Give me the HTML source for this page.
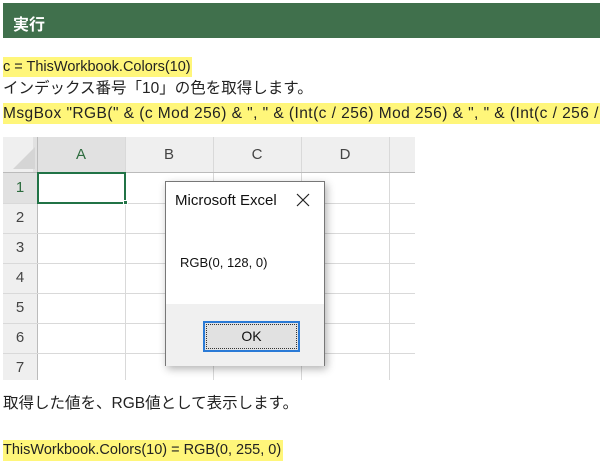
<!DOCTYPE html>
<html><head><meta charset="utf-8"><style>
*{margin:0;padding:0;box-sizing:border-box}
body{width:600px;height:450px;overflow:hidden;background:#fff;font-family:"Liberation Sans","Noto Sans CJK JP",sans-serif;color:#222;position:relative;font-size:15.5px}
.a{position:absolute;white-space:nowrap}
.hl{background:#fff67a}
.hdr{left:3px;top:3px;width:597px;height:35px;background:#40704c;color:#fff;font-weight:bold;font-size:16px;padding:8px 0 0 10px}
.xl{left:3px;top:137px;width:412px;height:243px;background:#fff;overflow:hidden}
.v{position:absolute;top:0;width:1px;height:243px;background:#d9d9d9}
.h{position:absolute;left:0;height:1px;width:412px;background:#d9d9d9}
.ch{position:absolute;top:0;height:35px;font-size:15px;color:#444;text-align:center;line-height:35px}
.rh{position:absolute;left:0;width:34px;font-size:15px;color:#444;text-align:center;line-height:30px}
</style></head><body>
<div class="a hdr">実行</div>
<div class="a hl" style="left:3px;top:57px;height:20px;line-height:20px;font-size:14.5px;padding-right:1px">c = ThisWorkbook.Colors(10)</div>
<div class="a" style="left:3px;top:79px;line-height:20px">インデックス番号「10」の色を取得します。</div>
<div class="a hl" style="left:3px;top:103px;height:21px;width:597px;line-height:21px;overflow:hidden;letter-spacing:0.45px">MsgBox "RGB(" &amp; (c Mod 256) &amp; ", " &amp; (Int(c / 256) Mod 256) &amp; ", " &amp; (Int(c / 256 / 256) Mod 256) &amp; ")"</div>
<div class="a xl">
 <div style="position:absolute;left:0;top:0;width:412px;height:35px;background:#efefef"></div>
 <div style="position:absolute;left:0;top:0;width:34px;height:243px;background:#efefef"></div>
 <div style="position:absolute;left:30px;top:0;width:93px;height:35px;background:#e1e1e1"></div>
 <div style="position:absolute;left:0;top:35px;width:34px;height:31px;background:#e1e1e1"></div>
 <svg style="position:absolute;left:10px;top:10px" width="22" height="22"><polygon points="22,0 22,22 0,22" fill="#d5d5d5"/></svg>
 <div class="v" style="left:34px;background:#bbb"></div>
 <div class="v" style="left:122px"></div><div class="v" style="left:210px"></div><div class="v" style="left:298px"></div><div class="v" style="left:386px"></div>
 <div class="h" style="top:35px;background:#bbb"></div>
 <div class="h" style="top:66px"></div><div class="h" style="top:96px"></div><div class="h" style="top:126px"></div><div class="h" style="top:156px"></div><div class="h" style="top:186px"></div><div class="h" style="top:216px"></div>
 <div class="ch" style="left:34px;width:88px;color:#2d6b3e">A</div><div class="ch" style="left:122px;width:88px">B</div><div class="ch" style="left:210px;width:88px">C</div><div class="ch" style="left:298px;width:88px">D</div>
 <div class="rh" style="top:36px;color:#2d6b3e">1</div><div class="rh" style="top:66px">2</div><div class="rh" style="top:96px">3</div><div class="rh" style="top:126px">4</div><div class="rh" style="top:156px">5</div><div class="rh" style="top:186px">6</div><div class="rh" style="top:216px">7</div>
 <div style="position:absolute;left:34px;top:35px;width:89px;height:32px;border:2px solid #217346"></div>
 <div style="position:absolute;left:120px;top:63px;width:5px;height:5px;background:#217346;border:1px solid #fff"></div>
</div>
<div class="a" style="left:165px;top:181px;width:160px;height:185px;background:#fff;border:1px solid #777;box-shadow:2px 3px 8px rgba(0,0,0,.3)">
 <div class="a" style="left:9px;top:10px;font-size:15px;color:#111">Microsoft Excel</div>
 <svg class="a" style="left:130px;top:11px" width="14" height="14"><path d="M1 1L13 13M13 1L1 13" stroke="#222" stroke-width="1.2"/></svg>
 <div class="a" style="left:14px;top:73px;font-size:13px;color:#111">RGB(0, 128, 0)</div>
 <div class="a" style="left:0;top:122px;width:158px;height:62px;background:#f0f0f0"></div>
 <div class="a" style="left:37px;top:139px;width:97px;height:31px;border:2px solid #2a7ad6;background:#e1e1e1;text-align:center;line-height:27px;font-size:14px;color:#111"><div style="position:absolute;inset:1px;border:1px dotted #333"></div>OK</div>
</div>
<div class="a" style="left:3px;top:394px;line-height:20px">取得した値を、RGB値として表示します。</div>
<div class="a hl" style="left:3px;top:440px;height:21px;line-height:21px;padding-right:2px;font-size:14.5px">ThisWorkbook.Colors(10) = RGB(0, 255, 0)</div>
</body></html>
